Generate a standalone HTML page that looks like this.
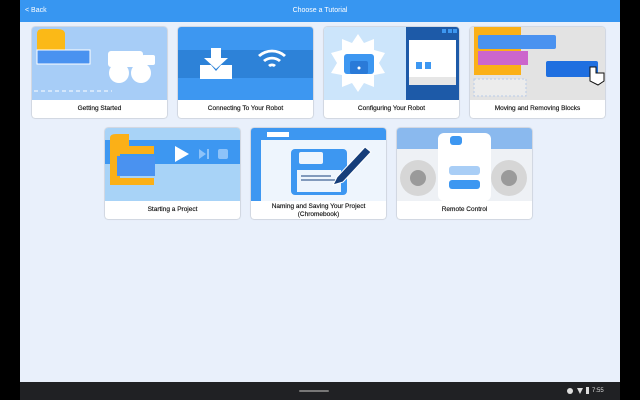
<!DOCTYPE html><html><head><style>
*{margin:0;padding:0;box-sizing:border-box}
body{width:640px;height:400px;background:#000;position:relative;overflow:hidden;font-family:"Liberation Sans",sans-serif}
#app{position:absolute;left:20px;top:0;width:600px;height:382px;background:#e9f0fb}
#top{position:absolute;left:0;top:0;width:600px;height:22px;background:#3796f1;color:#fff;font-size:7px}
#top .b{position:absolute;left:5px;top:7px}
#top .t{position:absolute;left:0;width:600px;text-align:center;top:7px}
#nav{position:absolute;left:20px;top:382px;width:600px;height:18px;background:#202124}
.card{position:absolute;width:135px;height:91px;background:#fff;border-radius:3px;box-shadow:0 0 1.5px rgba(0,0,0,.4);overflow:hidden}
.img{position:absolute;left:0;top:0;width:135px;height:73px;overflow:hidden}
.lbl{position:absolute;left:0;top:73px;width:135px;height:18px;font-size:6.5px;color:#111;text-align:center;line-height:18px;-webkit-text-stroke:0.15px #111}
.lbl.two{line-height:7.5px;padding-top:2px}
</style></head><body>
<div id="app">
<div id="top"><span class="b">&lt; Back</span><span class="t">Choose a Tutorial</span></div>
</div>
<div class="card" style="left:32px;top:27px"><div class="img" style="background:#a7cdf7">
<svg width="135" height="73"><path d="M5 7 q0-5 5-5h15q8 0 8 5v18h-28z" fill="#fbb917"/><rect x="5" y="23" width="53" height="14" fill="#4a92f0" stroke="#fff" stroke-width="1"/><g fill="#fff"><rect x="76" y="24" width="35" height="16" rx="3"/><rect x="110" y="28" width="13" height="10" rx="2"/><circle cx="87" cy="46" r="10"/><circle cx="109" cy="46" r="10"/></g><line x1="2" y1="64" x2="80" y2="64" stroke="#fff" stroke-dasharray="4 3"/></svg></div><div class="lbl">Getting Started</div></div>
<div class="card" style="left:178px;top:27px"><div class="img" style="background:#3d97f1">
<svg width="135" height="73"><rect x="0" y="23" width="135" height="28" fill="#2d82d8"/><g fill="#fff"><path d="M33 21h10v10h7l-12 11-12-11h7z"/><path d="M22 38h11l5 6 5-6h11v14h-32z"/><path d="M85 33a14 14 0 0 1 18 0l-2 2a11 11 0 0 0-14 0zM80 28a21 21 0 0 1 28 0l-2 2a18 18 0 0 0-24 0zM90 38a6 6 0 0 1 8 0l-2 2a3 3 0 0 0-4 0z"/></g></svg></div><div class="lbl">Connecting To Your Robot</div></div>
<div class="card" style="left:324px;top:27px"><div class="img" style="background:#cce5fb">
<svg width="135" height="73"><polygon points="34,7 40,16 50,12 50,23 61,26 55,36 61,46 50,48 50,60 40,56 34,65 28,56 18,60 18,48 7,46 13,36 7,26 18,23 18,12 28,16" fill="#fff"/><rect x="20" y="27" width="30" height="20" rx="3" fill="#3d97f1"/><rect x="26" y="34" width="18" height="13" rx="2" fill="#2a7ad8"/><circle cx="35" cy="41" r="1.5" fill="#fff"/><rect x="82" y="0" width="53" height="73" fill="#1d5aa8"/><rect x="85" y="13" width="47" height="45" fill="#fff"/><rect x="85" y="50" width="47" height="8" fill="#e6e6e6"/><rect x="92" y="35" width="6" height="7" fill="#3d97f1"/><rect x="101" y="35" width="6" height="7" fill="#3d97f1"/><rect x="118" y="2" width="4" height="4" fill="#3d97f1"/><rect x="124" y="2" width="4" height="4" fill="#3d97f1"/><rect x="129" y="2" width="4" height="4" fill="#3d97f1"/></svg></div><div class="lbl">Configuring Your Robot</div></div>
<div class="card" style="left:470px;top:27px"><div class="img" style="background:#e3e3e3">
<svg width="135" height="73"><rect x="4" y="0" width="47" height="48" fill="#fbb017"/><rect x="8" y="8" width="78" height="14" rx="2" fill="#4a92f0"/><rect x="8" y="24" width="50" height="14" fill="#cc66cc"/><rect x="4" y="52" width="52" height="17" fill="#ececec" stroke="#b9cbe8" stroke-dasharray="2 2"/><rect x="76" y="34" width="52" height="16" rx="2" fill="#1f6fe0"/><path d="M120 40v14l8 4 6-4v-8h-8v-6z" fill="#fff" stroke="#111" stroke-width="1"/></svg></div><div class="lbl">Moving and Removing Blocks</div></div>
<div class="card" style="left:105px;top:128px"><div class="img" style="background:#a8d3f7">
<svg width="135" height="73"><rect x="0" y="12" width="135" height="24" fill="#3d97f1"/><path d="M5 10q0-4 6-4h13v14h-19z" fill="#fbb017"/><rect x="5" y="18" width="44" height="8" fill="#fbb017"/><rect x="5" y="23" width="10" height="34" fill="#fbb017"/><rect x="5" y="50" width="44" height="7" fill="#fbb017"/><rect x="12" y="28" width="38" height="20" fill="#4a92f0"/><path d="M70 18v16l14-8z" fill="#fff"/><path d="M94 21v10l7-5z M102 21h2v10h-2z" fill="#8ec3f9"/><rect x="113" y="21" width="10" height="10" rx="2" fill="#8ec3f9"/></svg></div><div class="lbl">Starting a Project</div></div>
<div class="card" style="left:251px;top:128px"><div class="img" style="background:#3d97f1">
<svg width="135" height="73"><rect x="10" y="12" width="125" height="61" fill="#eef5fd"/><rect x="16" y="4" width="22" height="5" fill="#fff"/><rect x="40" y="21" width="56" height="46" rx="4" fill="#3d97f1"/><rect x="48" y="24" width="24" height="12" rx="2" fill="#eef5fd"/><rect x="46" y="42" width="44" height="22" fill="#eef5fd"/><line x1="50" y1="48" x2="80" y2="48" stroke="#163e7a"/><line x1="50" y1="52" x2="86" y2="52" stroke="#163e7a"/><path d="M82 57l4-8 28-30 6 5-28 30z" fill="#163e7a" stroke="#fff"/></svg></div><div class="lbl two">Naming and Saving Your Project<br>(Chromebook)</div></div>
<div class="card" style="left:397px;top:128px"><div class="img" style="background:#eef1f5">
<svg width="135" height="73"><rect x="0" y="0" width="135" height="21" fill="#8ab9ee"/><rect x="41" y="5" width="53" height="68" rx="6" fill="#fff"/><rect x="53" y="8" width="12" height="9" rx="3" fill="#3d97f1"/><rect x="52" y="38" width="31" height="9" rx="3" fill="#a9cef6"/><rect x="52" y="52" width="31" height="9" rx="3" fill="#3d97f1"/><circle cx="21" cy="50" r="18" fill="#d6d6d6"/><circle cx="21" cy="50" r="8" fill="#9a9a9a"/><circle cx="112" cy="50" r="18" fill="#d6d6d6"/><circle cx="112" cy="50" r="8" fill="#9a9a9a"/></svg></div><div class="lbl">Remote Control</div></div>
<div id="nav"><div style="position:absolute;left:279px;top:8px;width:30px;height:2px;background:#777;border-radius:1px"></div>
<div style="position:absolute;left:547px;top:6px;width:6px;height:6px;border-radius:50%;background:#ddd"></div>
<div style="position:absolute;left:557px;top:6px;width:0;height:0;border-left:3px solid transparent;border-right:3px solid transparent;border-top:6px solid #ddd"></div>
<div style="position:absolute;left:566px;top:5px;width:3px;height:7px;background:#ddd"></div>
<div style="position:absolute;left:572px;top:6px;font-size:6px;line-height:6px;color:#ddd">7:55</div></div>
</body></html>
